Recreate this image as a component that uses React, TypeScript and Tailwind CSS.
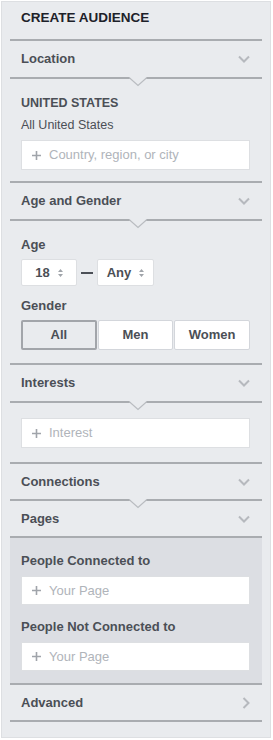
import React from "react";

const font = { fontFamily: '"Liberation Sans", Arial, sans-serif' };

function Divider({ notch }: { notch?: boolean }) {
  return (
    <div className="relative mx-[8px] h-[2px] bg-[#a9acb0]">
      {notch && (
        <svg className="absolute left-[119px] top-0" width="18" height="10" viewBox="0 0 18 10">
          <path d="M0 0 L9 9 L18 0 Z" fill="#e9ebee" />
          <path d="M0 0.5 L9 8.5 L18 0.5" fill="none" stroke="#b9bcc0" strokeWidth="1.3" />
        </svg>
      )}
    </div>
  );
}

function ChevronDown() {
  return (
    <svg width="12" height="8" viewBox="0 0 12 8">
      <path d="M1 1.5 L6 6.5 L11 1.5" fill="none" stroke="#b6b9be" strokeWidth="2" />
    </svg>
  );
}

function ChevronRight() {
  return (
    <svg width="8" height="12" viewBox="0 0 8 12">
      <path d="M1.5 1 L6.5 6 L1.5 11" fill="none" stroke="#b6b9be" strokeWidth="2" />
    </svg>
  );
}

function Header({ label, h = "h-[36px]", right }: { label: string; h?: string; right?: boolean }) {
  return (
    <div className={`mx-[8px] flex items-center justify-between pl-[11px] pr-[12px] ${h}`}>
      <span className="text-[13px] font-bold leading-[16px] text-[#4b4f56]">{label}</span>
      {right ? <ChevronRight /> : <ChevronDown />}
    </div>
  );
}

function Field({ text, h = "h-[30px]" }: { text: string; h?: string }) {
  return (
    <div className={`flex w-full items-center border border-[#dddfe2] bg-white pl-[10px] ${h}`}>
      <svg width="9" height="9" viewBox="0 0 9 9" className="mr-[8px]">
        <path d="M4.5 0 V9 M0 4.5 H9" stroke="#a0a4aa" strokeWidth="1.6" />
      </svg>
      <span className="text-[13px] leading-[16px] text-[#b0b4ba]">{text}</span>
    </div>
  );
}

function Arrows() {
  return (
    <svg width="5" height="8" viewBox="0 0 5 8" className="ml-[8px]">
      <path d="M2.5 0 L5 3 H0 Z M2.5 8 L5 5 H0 Z" fill="#a0a4aa" />
    </svg>
  );
}

function Select({ value, w }: { value: string; w: string }) {
  return (
    <div className={`flex h-[27px] items-center justify-center rounded-[2px] border border-[#dddfe2] bg-white ${w}`}>
      <span className="text-[13px] font-bold leading-[16px] text-[#4b4f56]">{value}</span>
      <Arrows />
    </div>
  );
}

export default function App() {
  return (
    <div className="h-[740px] w-[273px] bg-white pl-[1px] pt-[1px]" style={font}>
      <div className="h-[737px] w-[270px] border border-[#dddfe2] bg-[#e9ebee]">
        <div className="mx-[8px] h-[37px] pl-[11px] pt-[3px]">
          <span className="text-[13.5px] font-bold leading-[16px] text-[#1d2129]">CREATE AUDIENCE</span>
        </div>
        <Divider />
        <Header label="Location" />
        <Divider notch />
        <div className="mx-[8px] pb-[11px] pl-[11px] pr-[12px] pt-[16px]">
          <div className="text-[12.5px] font-bold leading-[16px] text-[#4b4f56]">UNITED STATES</div>
          <div className="mt-[6px] text-[12.5px] leading-[16px] text-[#4b4f56]">All United States</div>
          <div className="mt-[7px]">
            <Field text="Country, region, or city" />
          </div>
        </div>
        <Divider />
        <Header label="Age and Gender" />
        <Divider notch />
        <div className="mx-[8px] pb-[13px] pl-[11px] pr-[12px] pt-[16px]">
          <div className="text-[13px] font-bold leading-[16px] text-[#4b4f56]">Age</div>
          <div className="mt-[6px] flex items-center">
            <Select value="18" w="w-[56px]" />
            <div className="mx-[4px] h-[2px] w-[12px] bg-[#4b4f56]" />
            <Select value="Any" w="w-[57px]" />
          </div>
          <div className="mt-[12px] text-[13px] font-bold leading-[16px] text-[#4b4f56]">Gender</div>
          <div className="mt-[6px] grid h-[30px] grid-cols-3 gap-[1px]">
            <div className="flex items-center justify-center rounded-[2px] border-2 border-[#a2a5aa] bg-[#e9ebee] text-[13px] font-bold text-[#4b4f56]">
              All
            </div>
            <div className="flex items-center justify-center rounded-[2px] border border-[#d3d6db] bg-white text-[13px] font-bold text-[#4b4f56]">
              Men
            </div>
            <div className="flex items-center justify-center rounded-[2px] border border-[#d3d6db] bg-white text-[13px] font-bold text-[#4b4f56]">
              Women
            </div>
          </div>
        </div>
        <Divider />
        <Header label="Interests" />
        <Divider notch />
        <div className="mx-[8px] pb-[14px] pl-[11px] pr-[12px] pt-[15px]">
          <Field text="Interest" />
        </div>
        <Divider />
        <Header label="Connections" h="h-[35px]" />
        <Divider notch />
        <Header label="Pages" h="h-[35px]" />
        <Divider />
        <div className="mx-[8px] bg-[#dcdee3] pb-[12px] pl-[11px] pr-[12px] pt-[15px]">
          <div className="text-[13px] font-bold leading-[16px] text-[#4b4f56]">People Connected to</div>
          <div className="mt-[7px]">
            <Field text="Your Page" h="h-[29px]" />
          </div>
          <div className="mt-[14px] text-[13px] font-bold leading-[16px] text-[#4b4f56]">People Not Connected to</div>
          <div className="mt-[7px]">
            <Field text="Your Page" h="h-[29px]" />
          </div>
        </div>
        <Divider />
        <Header label="Advanced" h="h-[35px]" right />
        <Divider />
      </div>
    </div>
  );
}
